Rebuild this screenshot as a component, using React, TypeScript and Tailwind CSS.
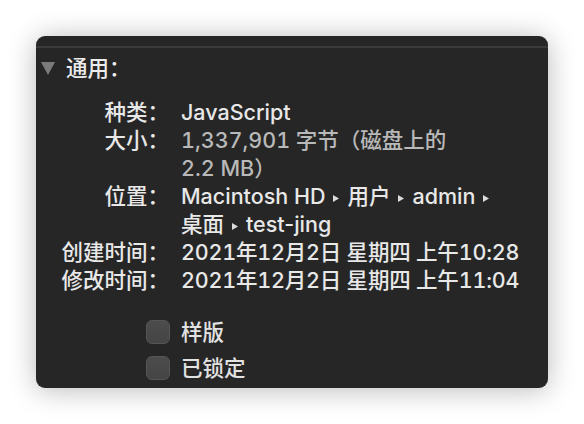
import React from 'react';

const font = { fontFamily: 'Inter, "Noto Sans CJK SC", sans-serif' };

function Arrow() {
  return (
    <svg width="6" height="9" viewBox="0 0 6 9" className="mx-[8px] inline-block align-middle">
      <path d="M0 1 L6 4.5 L0 8 Z" fill="#dcdcdc" />
    </svg>
  );
}

function Row({ label, children }: { label: string; children: React.ReactNode }) {
  return (
    <>
      <div className="text-right text-[#e8e8e8]">{label}</div>
      <div className="whitespace-nowrap">{children}</div>
    </>
  );
}

function Check({ label }: { label: string }) {
  return (
    <div className="flex h-6 items-center gap-[11px]">
      <div className="h-6 w-6 rounded-[6px] border border-[#555] bg-gradient-to-b from-[#4c4c4c] to-[#454545]" />
      <span className="text-[#e2e2e2]">{label}</span>
    </div>
  );
}

export default function App() {
  return (
    <div className="flex h-[424px] w-[584px] bg-white" style={font}>
      <div className="ml-9 mt-9 flex h-[352px] w-[512px] flex-col rounded-[9px] bg-[#262626] pt-[10px] shadow-[0_2px_28px_rgba(0,0,0,0.28)]">
        <div className="border-t-2 border-[#3a3a3a] pt-[6px]">
          <div className="flex h-7 items-center text-[21.5px] font-medium text-[#ececec]">
            <svg width="14" height="13" viewBox="0 0 14 13" className="ml-[5px] mr-[11px]">
              <path d="M0 0 H14 L7 13 Z" fill="#7b7b7b" />
            </svg>
            <span>通用：</span>
          </div>
          <div className="mt-4 grid grid-cols-[133px_1fr] gap-x-[12px] text-[21.5px] font-medium leading-[28px] text-[#e8e8e8]">
            <Row label="种类：">JavaScript</Row>
            <Row label="大小：">
              <span className="text-[#b9b9b9] tabular-nums">
                1,337,901 字节（磁盘上的
                <br />
                2.2 MB）
              </span>
            </Row>
            <Row label="位置：">
              Macintosh HD
              <Arrow />
              用户
              <Arrow />
              admin
              <Arrow />
              <br />
              桌面
              <Arrow />
              test-jing
            </Row>
            <Row label="创建时间：">
              <span className="tabular-nums tracking-[-0.2px]">2021年12月2日 星期四 上午10:28</span>
            </Row>
            <Row label="修改时间：">
              <span className="tabular-nums tracking-[-0.2px]">2021年12月2日 星期四 上午11:04</span>
            </Row>
          </div>
          <div className="ml-[110px] mt-[26px] flex flex-col gap-3 text-[21.5px] font-medium">
            <Check label="样版" />
            <Check label="已锁定" />
          </div>
        </div>
      </div>
    </div>
  );
}
